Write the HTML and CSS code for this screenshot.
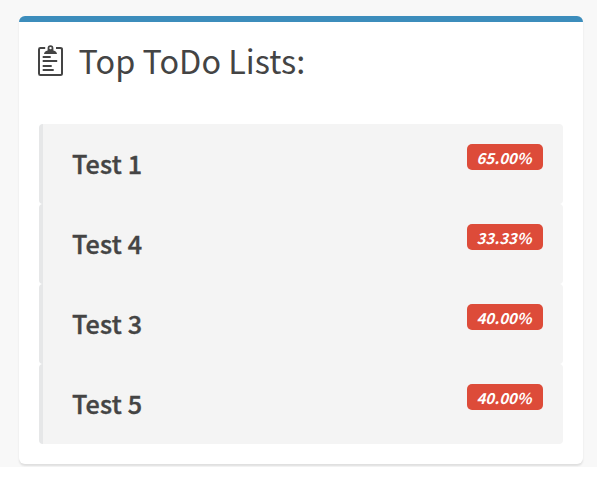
FILE: index.html
```html
<!DOCTYPE html>
<html lang="en">
<head>
<meta charset="utf-8">
<title>Top ToDo Lists</title>
<link rel="stylesheet" href="styles.css">
</head>
<body>
<main class="content">
  <section class="box">
    <header class="box-header">
      <svg class="icon" width="26" height="32" viewBox="0 0 26 32" aria-hidden="true">
        <path d="M7.2 3H2.4Q1 3 1 4.4V28.5Q1 30 2.4 30H22.4Q24 30 24 28.5V4.4Q24 3 22.4 3H18" fill="none" stroke="#444" stroke-width="2"/>
        <path fill="#444" fill-rule="evenodd" d="M6 9Q6.3 6.3 9.6 5.4V3.2A2.9 2.9 0 0 1 15.4 3.2V5.4Q18.7 6.3 19 9ZM12.5 1.9A1.2 1.2 0 1 0 12.5 4.3A1.2 1.2 0 1 0 12.5 1.9Z"/>
        <path d="M4.7 12H12.7M4.7 16H19.2M4.7 21H13.7M4.7 25H15.7" stroke="#444" stroke-width="2"/>
      </svg>
      <h1 class="box-title">Top ToDo Lists:</h1>
    </header>
    <ul class="todo-list">
      <li class="todo"><span class="text">Test 1</span><em class="label">65.00%</em></li>
      <li class="todo"><span class="text">Test 4</span><em class="label">33.33%</em></li>
      <li class="todo"><span class="text">Test 3</span><em class="label">40.00%</em></li>
      <li class="todo"><span class="text">Test 5</span><em class="label">40.00%</em></li>
    </ul>
  </section>
</main>
</body>
</html>
```
FILE: styles.css
```css
* { box-sizing: border-box; }
body {
  margin: 0;
  background: #fff;
  color: #444;
  font-family: "Source Sans Pro", "Noto Sans CJK SC", sans-serif;
}
.content {
  width: 597px;
  height: 467px;
  padding: 16px 14px 0 19px;
  background: #f8f8f8;
  overflow: hidden;
}
.box {
  height: 448px;
  border-top: 6px solid #3c8dbc;
  border-radius: 6px;
  background: #fff;
  box-shadow: 0 2px 2px rgba(0, 0, 0, .1);
}
.box-header {
  display: flex;
  height: 102px;
  padding: 23px 0 0 19px;
}
.icon { flex: none; }
.box-title {
  margin: -7px 0 0 14.5px;
  font-size: 32.4px;
  line-height: 44px;
  font-weight: 400;
  white-space: nowrap;
}
.todo-list {
  margin: 0 20px;
  padding: 0;
  list-style: none;
}
.todo {
  display: flex;
  justify-content: space-between;
  align-items: flex-start;
  height: 80px;
  padding: 20px 20px 0 29px;
  border-left: 4px solid #e6e7e8;
  border-radius: 4px;
  background: #f4f4f4;
}
.text {
  font-size: 25.2px;
  line-height: 39px;
  font-weight: 500;
  letter-spacing: .2px;
  -webkit-text-stroke: .4px #444;
}
.label {
  width: 76px;
  height: 26px;
  padding-right: 2px;
  border-radius: 5px;
  background: #dd4b39;
  color: #fff;
  font-size: 15.1px;
  line-height: 27px;
  font-weight: 700;
  text-align: center;
}
```
